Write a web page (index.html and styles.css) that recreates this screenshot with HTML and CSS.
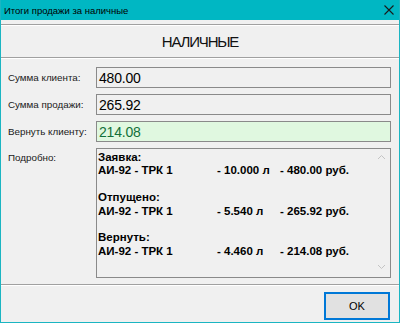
FILE: index.html
```html
<!DOCTYPE html>
<html>
<head>
	<title>Итоги продажи за наличные</title>
	<link rel="stylesheet" href="styles.css">
</head>
<body>
	<div class="window">
		<div class="titlebar">
			<span class="title">Итоги продажи за наличные</span>
			<svg class="close" width="10" height="10" viewBox="0 0 10 10">
				<path d="M0.5 0.5 L9.5 9.5 M9.5 0.5 L0.5 9.5" stroke="#1a1a1a" stroke-width="1.1" fill="none"/>
			</svg>
		</div>
		<div class="header">НАЛИЧНЫЕ</div>
		<div class="fields">
			<div class="row">
				<div class="label">Сумма клиента:</div>
				<div class="field">480.00</div>
			</div>
			<div class="row">
				<div class="label">Сумма продажи:</div>
				<div class="field">265.92</div>
			</div>
			<div class="row">
				<div class="label">Вернуть клиенту:</div>
				<div class="field field-return">214.08</div>
			</div>
			<div class="row row-details">
				<div class="label">Подробно:</div>
				<div class="details">
					<div class="details-text">
						<div>Заявка:</div>
						<div class="line"><span class="c1">АИ-92 - ТРК 1</span><span class="c2">- 10.000 л</span><span>- 480.00 руб.</span></div>
						<div class="blank"></div>
						<div>Отпущено:</div>
						<div class="line"><span class="c1">АИ-92 - ТРК 1</span><span class="c2">- 5.540 л</span><span>- 265.92 руб.</span></div>
						<div class="blank"></div>
						<div>Вернуть:</div>
						<div class="line"><span class="c1">АИ-92 - ТРК 1</span><span class="c2">- 4.460 л</span><span>- 214.08 руб.</span></div>
					</div>
					<div class="scroll">
						<svg width="9" height="6" viewBox="0 0 9 6"><path d="M1 5 L4.5 1.5 L8 5" stroke="#c4c4c4" fill="none"/></svg>
						<svg width="9" height="6" viewBox="0 0 9 6"><path d="M1 1 L4.5 4.5 L8 1" stroke="#c4c4c4" fill="none"/></svg>
					</div>
				</div>
			</div>
		</div>
		<div class="footer">
			<div class="btn">OK</div>
		</div>
	</div>
</body>
</html>
```

FILE: styles.css
```css
body{
	margin: 0;
	background: #f0f0f0;
	font-family: "Liberation Sans", Arial, sans-serif;
}
.window{
	width: 400px;
	height: 323px;
	box-sizing: border-box;
	border: 1px solid #1bb5c2;
	border-top: none;
	background: #f0f0f0;
	display: flex;
	flex-direction: column;
	overflow: hidden;
}
.titlebar{
	flex-shrink: 0;
	height: 20px;
	margin: 0 -1px;
	background: #00b7c3;
	display: flex;
	align-items: center;
	justify-content: space-between;
	padding: 0 6px 0 4px;
}
.title{
	font-size: 9.5px;
	color: #000;
}
.header{
	flex-shrink: 0;
	margin-top: 4px;
	height: 32px;
	border-top: 1px solid #a0a0a0;
	border-bottom: 1px solid #a0a0a0;
	box-shadow: inset 0 1px 0 #fff, 0 1px 0 #fff;
	text-align: center;
	line-height: 33px;
	font-size: 15px;
	letter-spacing: -1.2px;
	color: #111;
}
.fields{
	padding: 9px 8px 0 7px;
	display: flex;
	flex-direction: column;
	gap: 6px;
}
.row{
	display: flex;
	align-items: center;
}
.row-details{
	align-items: flex-start;
}
.label{
	flex-shrink: 0;
	width: 88px;
	white-space: nowrap;
	font-size: 9.8px;
	color: #1a1a1a;
}
.row-details .label{
	padding-top: 4px;
}
.field{
	flex: 1;
	height: 19px;
	border: 1px solid #8a8a8a;
	background: #f0f0f0;
	font-size: 14px;
	letter-spacing: -0.2px;
	line-height: 20px;
	padding-left: 2px;
	color: #000;
}
.field-return{
	background: #e0f8e0;
	color: #13703a;
}
.details{
	flex: 1;
	height: 128px;
	border: 1px solid #8a8a8a;
	display: flex;
}
.details-text{
	flex: 1;
	padding: 2px 0 0 1px;
	font-weight: bold;
	font-size: 11.5px;
	line-height: 13.4px;
	color: #000;
	white-space: nowrap;
}
.blank{
	height: 13.4px;
}
.line{
	display: flex;
}
.c1{
	width: 119px;
}
.c2{
	width: 63px;
}
.scroll{
	width: 17px;
	display: flex;
	flex-direction: column;
	justify-content: space-between;
	align-items: center;
	padding: 5px 0 7px;
}
.footer{
	flex-shrink: 0;
	margin-top: auto;
	box-sizing: border-box;
	height: 38px;
	border-top: 1px solid #a0a0a0;
	box-shadow: inset 0 1px 0 #fff;
	display: flex;
	justify-content: flex-end;
	align-items: flex-start;
	padding: 7px 9px 0 0;
}
.btn{
	width: 62px;
	height: 24px;
	border: 2px solid #0078d7;
	background: #e1e1e1;
	text-align: center;
	line-height: 24px;
	font-size: 11px;
	color: #000;
}
```
